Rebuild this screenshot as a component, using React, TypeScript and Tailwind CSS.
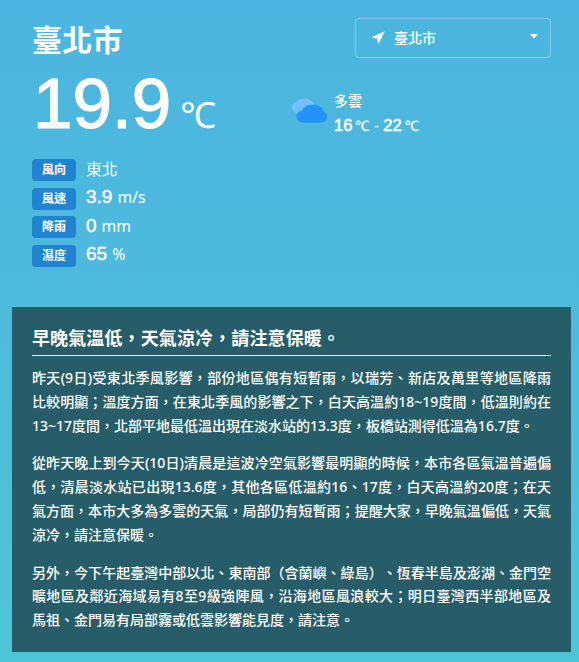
import React from "react";

const readings = [
  { label: "風向", value: "", unit: "東北" },
  { label: "風速", value: "3.9", unit: "m/s" },
  { label: "降雨", value: "0", unit: "mm" },
  { label: "濕度", value: "65", unit: "%" },
];

const paragraphs = [
  [
    "昨天(9日)受東北季風影響，部份地區偶有短暫雨，以瑞芳、新店及萬里等地區降雨",
    "比較明顯；溫度方面，在東北季風的影響之下，白天高溫約18~19度間，低溫則約在",
    "13~17度間，北部平地最低溫出現在淡水站的13.3度，板橋站測得低溫為16.7度。",
  ],
  [
    "從昨天晚上到今天(10日)清晨是這波冷空氣影響最明顯的時候，本市各區氣溫普遍偏",
    "低，清晨淡水站已出現13.6度，其他各區低溫約16、17度，白天高溫約20度；在天",
    "氣方面，本市大多為多雲的天氣，局部仍有短暫雨；提醒大家，早晚氣溫偏低，天氣",
    "涼冷，請注意保暖。",
  ],
  [
    "另外，今下午起臺灣中部以北、東南部（含蘭嶼、綠島）、恆春半島及澎湖、金門空",
    "曠地區及鄰近海域易有8至9級強陣風，沿海地區風浪較大；明日臺灣西半部地區及",
    "馬祖、金門易有局部霧或低雲影響能見度，請注意。",
  ],
];

function CitySelect() {
  return (
    <button className="flex h-[40px] w-[196px] items-center rounded border border-white/30 pb-px pl-4 pr-3 text-[14px] font-medium">
      <svg width="13" height="13" viewBox="0 0 13 13" fill="currentColor">
        <path d="M12.2.5.7 5.7c-.7.4-.5 1.3.2 1.3l4.4.4.6 4.5c.1.8.8.9 1.1.2L12.5.8c.1-.2-.1-.4-.3-.3Z" />
      </svg>
      <span className="ml-[9px]">臺北市</span>
      <svg className="ml-auto mb-[2px]" width="8" height="5" viewBox="0 0 8 5" fill="currentColor">
        <path d="M0 0h8L4 4.5Z" />
      </svg>
    </button>
  );
}

function CloudIcon() {
  return (
    <svg width="38" height="27" viewBox="0 0 38 27">
      <path fill="#72c0ff" d="M6.2 16.2A5.6 5.6 0 0 1 5.7 5.1 10 10 0 0 1 22.6 7l-5 9.2Z" />
      <path fill="#2493f7" d="M11.5 25.4a5.8 5.8 0 0 1-.5-11.7c1.1-4.1 5.5-6 11-6 5.9 0 9.5 2.6 11 7.1a5.5 5.5 0 0 1-1 10.4c-4.8.7-15.8.7-20.5.2Z" />
    </svg>
  );
}

export default function App() {
  return (
    <main
      lang="zh-TW"
      className="h-[662px] w-[579px] overflow-hidden bg-linear-to-b from-[#4cb5df] via-[#4ebbdc] to-[#4ec5d6] text-white [font-family:'Noto_Sans','Noto_Sans_CJK_TC',sans-serif] [text-spacing-trim:space-all]"
    >
      <header className="flex h-[74px] items-start justify-between pl-8 pr-7 pt-[18px]">
        <h1 className="text-[30px] font-bold leading-[40px] tracking-[0.3px] [font-family:'Noto_Sans_CJK_TC',sans-serif]">臺北市</h1>
        <CitySelect />
      </header>

      <section className="flex h-[85px] pl-[33px]">
        <div className="flex w-[258px] items-baseline whitespace-nowrap leading-[60px]">
          <span className="text-[71px] [-webkit-text-stroke:1.2px_white] [font-family:'Liberation_Sans',sans-serif]">19.9</span>
          <span className="ml-[9px] text-[36px]">℃</span>
        </div>
        <div className="flex pt-[17px]">
          <div className="pt-[6px]"><CloudIcon /></div>
          <div className="ml-[5px] text-[14px] font-medium">
            <p className="h-6 leading-[20px]">多雲</p>
            <p className="flex h-5 items-baseline whitespace-nowrap leading-5">
              <span className="text-[16.5px] [-webkit-text-stroke:0.5px_white] [font-family:'Liberation_Sans',sans-serif]">16</span>
              <span className="ml-[3px] text-[14.5px]">℃</span>
              <span className="mx-[4.5px]">-</span>
              <span className="text-[16.5px] [-webkit-text-stroke:0.5px_white] [font-family:'Liberation_Sans',sans-serif]">22</span>
              <span className="ml-[3px] text-[14.5px]">℃</span>
            </p>
          </div>
        </div>
      </section>

      <dl className="flex h-[107.5px] flex-col justify-between pl-8">
        {readings.map((r) => (
          <div key={r.label} className="flex h-[22px] items-center">
            <dt className="flex h-[22px] w-11 items-center justify-center rounded bg-[#2184d1] text-[12px] font-bold">{r.label}</dt>
            <dd className="ml-[10px] flex h-[25px] items-baseline leading-[22px]">
              {r.value && <span className="mr-[5px] text-[19px] [-webkit-text-stroke:0.4px_white] [font-family:'Liberation_Sans',sans-serif]">{r.value}</span>}
              <span className="text-[15.8px]">{r.unit}</span>
            </dd>
          </div>
        ))}
      </dl>

      <article className="ml-3 mt-[40.5px] h-[345px] w-[559px] bg-[#275d68] px-5 pt-[13px]">
        <h2 className="h-[36px] border-b border-white/90 text-[18px] font-bold leading-[35px] tracking-[0.12px] [font-family:'Noto_Sans_CJK_TC',sans-serif]">早晚氣溫低，天氣涼冷，請注意保暖。</h2>
        <div className="mt-[10px] flex flex-col gap-[14px] text-[14px] font-medium leading-[23.8px]">
          {paragraphs.map((lines, i) => (
            <p key={i}>
              {lines.map((line, j) => (
                <span
                  key={line}
                  className={j < lines.length - 1 ? "block whitespace-nowrap [text-align-last:justify]" : "block whitespace-nowrap"}
                >
                  {line}
                </span>
              ))}
            </p>
          ))}
        </div>
      </article>
    </main>
  );
}
